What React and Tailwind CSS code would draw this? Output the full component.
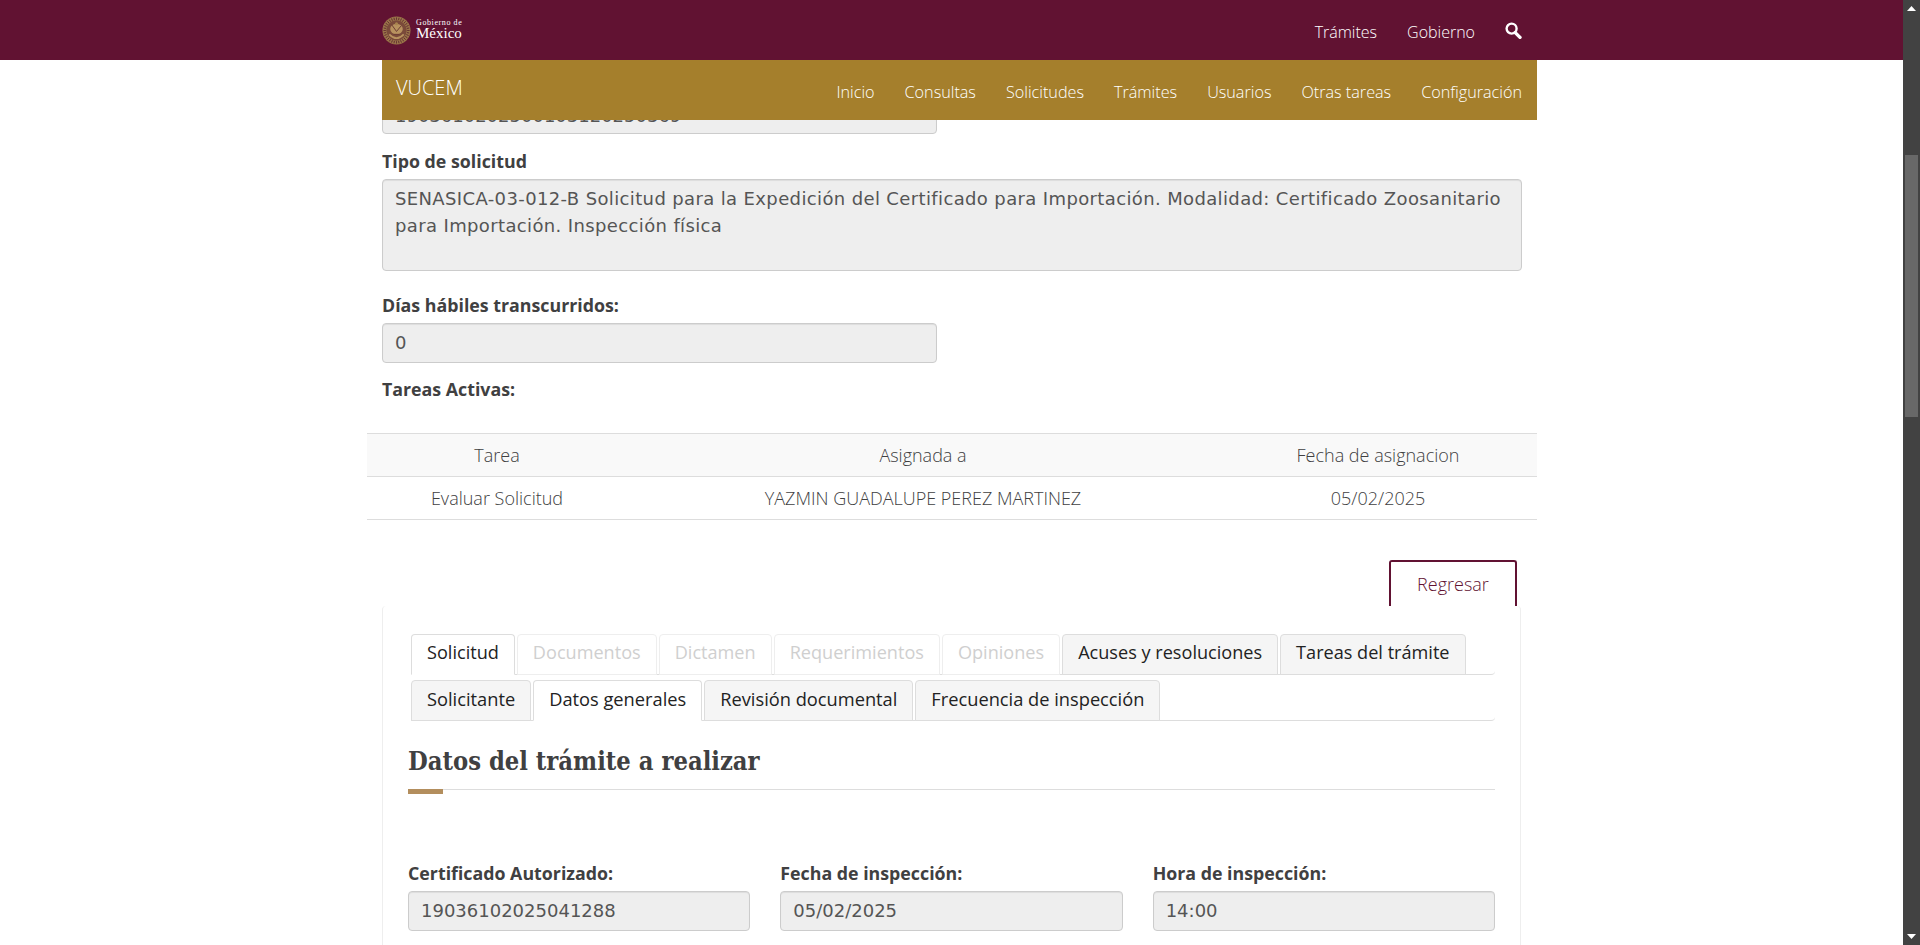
import React from "react";

const sans = "font-['Open_Sans',sans-serif]";
const field = "block rounded-[4px] border border-[#cccccc] bg-[#eeeeee] px-3 text-[#555555] text-[18px] font-['DejaVu_Sans',sans-serif] shadow-[inset_0_1px_1px_rgba(0,0,0,0.075)]";

function Label({ children }) {
  return <div className={`text-[17.8px] leading-[22px] font-bold text-[#404041] ${sans}`}>{children}</div>;
}

function Seal() {
  const ticks = Array.from({ length: 32 }, (_, i) => (i * 360) / 32);
  return (
    <svg width="29" height="29" viewBox="0 0 30 30" className="shrink-0">
      <circle cx="15" cy="15" r="14.5" fill="#9a7549" />
      <circle cx="15" cy="15" r="10.5" fill="#7a4a3a" />
      {ticks.map((a) => (
        <line key={a} x1="15" y1="1.5" x2="15" y2="4" stroke="#5f2a31" strokeWidth="0.9" transform={`rotate(${a} 15 15)`} />
      ))}
      <ellipse cx="15" cy="13.5" rx="6.5" ry="5.5" fill="#b8925f" />
      <path d="M7.5 19 Q15 27 22.5 19" fill="none" stroke="#b8925f" strokeWidth="1.8" />
      <path d="M10 9 L15 16 L20 10 M12 19 L18 19" fill="none" stroke="#6b3a33" strokeWidth="1" />
      <circle cx="15" cy="8" r="1.6" fill="#a8844f" />
    </svg>
  );
}

function SearchGlyph() {
  return (
    <svg width="17" height="17" viewBox="0 0 17 17" className="-mt-[3px]">
      <circle cx="6.6" cy="6.6" r="5" fill="none" stroke="#fff" strokeWidth="2.4" />
      <path d="M10.2 10.6 L15 15.4" stroke="#fff" strokeWidth="3.4" strokeLinecap="round" />
    </svg>
  );
}

function Tab({ children, variant, wide }) {
  const styles = {
    active: "bg-white text-[#222222] border-[#dddddd] border-b-white",
    disabled: "bg-white text-[#cfcfcf] border-[#eeeeee]",
    normal: "bg-[#f5f5f5] text-[#222222] border-[#dddddd]",
  }[variant];
  return (
    <div className={`h-[41px] -mb-px mr-[2px] px-[15px] pb-[3px] flex items-center rounded-t-[4px] border ${wide ? "text-[18.25px]" : "text-[18.12px]"} ${sans} ${styles}`}>
      {children}
    </div>
  );
}

function TabRow({ tabs, wide }) {
  return (
    <div className="flex border-b border-[#dddddd] rounded-br-[4px]">
      {tabs.map(([t, v]) => (
        <Tab key={t} variant={v} wide={wide}>{t}</Tab>
      ))}
    </div>
  );
}

export default function App() {
  return (
    <div className="flex h-[945px] w-full overflow-hidden bg-white">
      <div className="w-[1903px] h-full overflow-hidden">
        <header className="relative z-20 h-[60px] bg-[#611232] pl-[382px] pr-[381px] flex items-center justify-between">
          <div className="flex items-center gap-[5px]">
            <Seal />
            <div className="text-white font-['Liberation_Serif',serif] leading-none">
              <div className="text-[8px] tracking-[0.6px]">Gobierno de</div>
              <div className="text-[15px] -mt-[1px]">México</div>
            </div>
          </div>
          <nav className={`flex items-center gap-[30px] text-white text-[16px] mt-[4px] font-light ${sans}`}>
            <span>Trámites</span>
            <span>Gobierno</span>
            <SearchGlyph />
          </nav>
        </header>
        <div className="relative z-10 ml-[382px] w-[1155px] h-[60px] bg-[#a57f2c] flex items-center justify-between pl-[14px] pr-[15px] text-white font-light">
          <div className={`text-[20px] -mt-[4px] ${sans}`}>VUCEM</div>
          <nav className={`flex gap-[30px] text-[16.2px] mt-[4px] ${sans}`}>
            {["Inicio", "Consultas", "Solicitudes", "Trámites", "Usuarios", "Otras tareas", "Configuración"].map((n) => (
              <span key={n}>{n}</span>
            ))}
          </nav>
        </div>

        <main className="pl-[382px] pr-[366px]">
          <div className={`${field} w-[555px] h-[40px] -mt-[26px] pt-[2px] leading-[38px]`}>1903610202500103120250369</div>
          <div className="mt-[16px]"><Label>Tipo de solicitud</Label></div>
          <div className={`${field} w-[1140px] h-[92px] mt-[7px] py-[5px] leading-[27px] tracking-[0.37px]`}>
            SENASICA-03-012-B Solicitud para la Expedición del Certificado para Importación. Modalidad: Certificado Zoosanitario para Importación. Inspección física
          </div>
          <div className="mt-[23px]"><Label>Días hábiles transcurridos:</Label></div>
          <div className={`${field} w-[555px] h-[40px] mt-[7px] leading-[38px]`}>0</div>
          <div className="mt-[15px]"><Label>Tareas Activas:</Label></div>

          <table className={`-ml-[15px] mt-[33px] w-[1170px] text-center text-[18px] font-light text-[#404041] border-collapse ${sans}`}>
            <thead>
              <tr className="h-[43px] bg-[#f9f9f9] border-y border-[#dddddd]">
                <th className="w-[260px] font-light">Tarea</th>
                <th className="w-[592px] font-light">Asignada a</th>
                <th className="font-light">Fecha de asignacion</th>
              </tr>
            </thead>
            <tbody>
              <tr className="h-[43px] border-b border-[#dddddd]">
                <td>Evaluar Solicitud</td>
                <td>YAZMIN GUADALUPE PEREZ MARTINEZ</td>
                <td>05/02/2025</td>
              </tr>
            </tbody>
          </table>

          <div className="flex justify-end w-[1135px] mt-[40px]">
            <div className={`w-[128px] h-[46px] border-2 border-b-0 border-[#611232] rounded-t-[3px] flex items-center justify-center text-[18px] font-light text-[#611232] ${sans}`}>
              Regresar
            </div>
          </div>

          <section className="w-[1139px] border-x border-[#eeeeee] pl-[25px] pr-[25px] pt-[28px] h-[400px] rounded-t-[4px]">
            <div className="pl-[3px]">
              <TabRow tabs={[["Solicitud","active"],["Documentos","disabled"],["Dictamen","disabled"],["Requerimientos","disabled"],["Opiniones","disabled"],["Acuses y resoluciones","normal"],["Tareas del trámite","normal"]]} />
              <div className="mt-[5px]">
                <TabRow wide tabs={[["Solicitante","normal"],["Datos generales","active"],["Revisión documental","normal"],["Frecuencia de inspección","normal"]]} />
              </div>
            </div>
            <h2 className="mt-[24px] text-[25.3px] leading-[32px] font-bold text-[#404041] font-['DejaVu_Serif_Condensed','DejaVu_Serif',serif]">Datos del trámite a realizar</h2>
            <div className="relative mt-[12px] h-px bg-[#dddddd]">
              <div className="absolute left-0 top-0 w-[35px] h-[5px] bg-[#b38e5d]" />
            </div>
            <div className="mt-[72px] grid grid-cols-3 gap-x-[30px]">
              {[["Certificado Autorizado:","19036102025041288"],["Fecha de inspección:","05/02/2025"],["Hora de inspección:","14:00"]].map(([l,v]) => (
                <div key={l}>
                  <Label>{l}</Label>
                  <div className={`${field} h-[40px] mt-[7px] leading-[38px]`}>{v}</div>
                </div>
              ))}
            </div>
          </section>
        </main>
      </div>
      <div className="w-[17px] h-full bg-[#424242] flex flex-col items-center shrink-0">
        <div className="h-[17px] flex items-center justify-center">
          <svg width="9" height="5" viewBox="0 0 9 5"><path d="M4.5 0L9 5H0z" fill="#fff" /></svg>
        </div>
        <div className="w-[13px] h-[262px] mt-[138px] bg-[#686868]" />
        <div className="h-[17px] mt-auto flex items-center justify-center">
          <svg width="9" height="5" viewBox="0 0 9 5"><path d="M4.5 5L9 0H0z" fill="#fff" /></svg>
        </div>
      </div>
    </div>
  );
}
